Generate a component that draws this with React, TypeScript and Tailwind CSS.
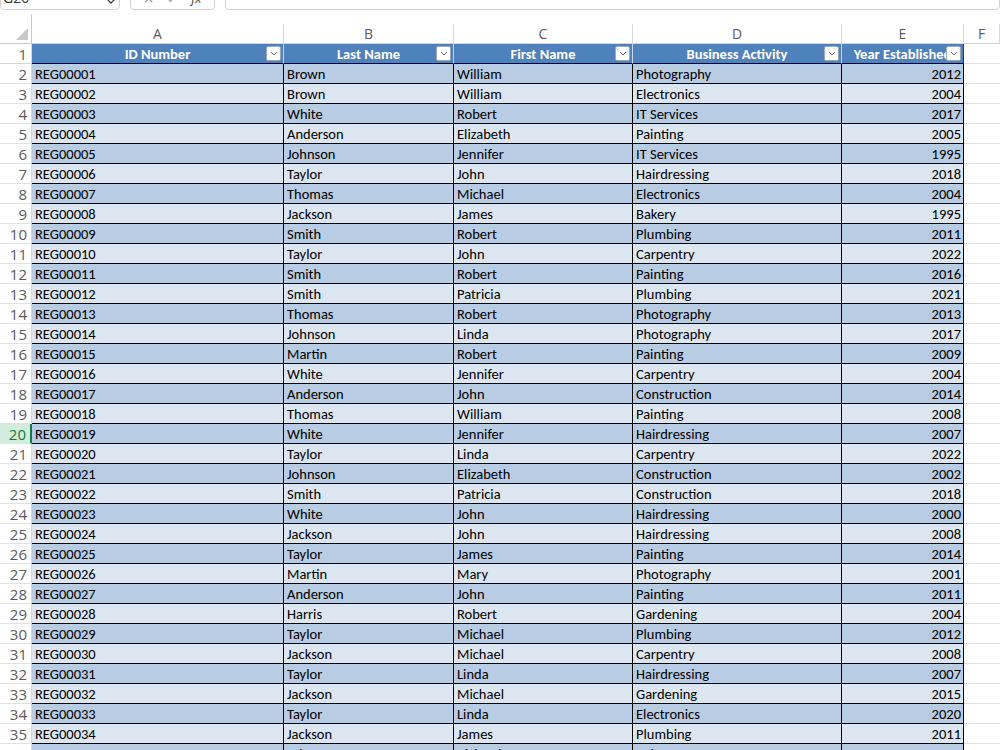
import React from "react";

type Row = [string, string, string, string, number];

const rows: Row[] = [
  ["REG00001", "Brown", "William", "Photography", 2012],
  ["REG00002", "Brown", "William", "Electronics", 2004],
  ["REG00003", "White", "Robert", "IT Services", 2017],
  ["REG00004", "Anderson", "Elizabeth", "Painting", 2005],
  ["REG00005", "Johnson", "Jennifer", "IT Services", 1995],
  ["REG00006", "Taylor", "John", "Hairdressing", 2018],
  ["REG00007", "Thomas", "Michael", "Electronics", 2004],
  ["REG00008", "Jackson", "James", "Bakery", 1995],
  ["REG00009", "Smith", "Robert", "Plumbing", 2011],
  ["REG00010", "Taylor", "John", "Carpentry", 2022],
  ["REG00011", "Smith", "Robert", "Painting", 2016],
  ["REG00012", "Smith", "Patricia", "Plumbing", 2021],
  ["REG00013", "Thomas", "Robert", "Photography", 2013],
  ["REG00014", "Johnson", "Linda", "Photography", 2017],
  ["REG00015", "Martin", "Robert", "Painting", 2009],
  ["REG00016", "White", "Jennifer", "Carpentry", 2004],
  ["REG00017", "Anderson", "John", "Construction", 2014],
  ["REG00018", "Thomas", "William", "Painting", 2008],
  ["REG00019", "White", "Jennifer", "Hairdressing", 2007],
  ["REG00020", "Taylor", "Linda", "Carpentry", 2022],
  ["REG00021", "Johnson", "Elizabeth", "Construction", 2002],
  ["REG00022", "Smith", "Patricia", "Construction", 2018],
  ["REG00023", "White", "John", "Hairdressing", 2000],
  ["REG00024", "Jackson", "John", "Hairdressing", 2008],
  ["REG00025", "Taylor", "James", "Painting", 2014],
  ["REG00026", "Martin", "Mary", "Photography", 2001],
  ["REG00027", "Anderson", "John", "Painting", 2011],
  ["REG00028", "Harris", "Robert", "Gardening", 2004],
  ["REG00029", "Taylor", "Michael", "Plumbing", 2012],
  ["REG00030", "Jackson", "Michael", "Carpentry", 2008],
  ["REG00031", "Taylor", "Linda", "Hairdressing", 2007],
  ["REG00032", "Jackson", "Michael", "Gardening", 2015],
  ["REG00033", "Taylor", "Linda", "Electronics", 2020],
  ["REG00034", "Jackson", "James", "Plumbing", 2011],
  ["REG00035", "Johnson", "Richard", "Bakery", 2019],
];

const headers = ["ID Number", "Last Name", "First Name", "Business Activity", "Year Established"];
const letters = ["A", "B", "C", "D", "E", "F"];

const gridCols = "grid grid-cols-[32px_252px_170px_179px_209px_122px_1fr] grid-rows-[20px] leading-none";
const cellFont = "font-['Carlito','Lato','Liberation_Sans',sans-serif]";
const uiFont = "font-['Segoe_UI','Open_Sans',sans-serif]";

function FilterButton() {
  return (
    <div className="absolute right-[2px] top-[2px] w-[15px] h-[15px] bg-white border border-[#9ea7b3] rounded-[2px] flex items-center justify-center">
      <svg width="8" height="5" viewBox="0 0 8 5" fill="none">
        <path d="M1 1 L4 4 L7 1" stroke="#6b6b6b" strokeWidth="1" />
      </svg>
    </div>
  );
}

export default function App() {
  const selectedRow = 20;
  return (
    <div className={`w-[1000px] h-[750px] overflow-hidden bg-white ${cellFont}`}>
      {/* formula bar, scrolled so only its lower edge shows */}
      <div className={`h-[10px] overflow-hidden flex items-end gap-[10px] ${uiFont} text-[14px] text-[#333]`}>
        <div className="w-[120px] h-[26px] shrink-0 border border-[#d1d1d1] rounded-[4px] bg-white flex items-center justify-between pl-[2px] pr-[3px]">
          <span className="leading-none mt-[2px]">G20</span>
          <svg width="10" height="6" viewBox="0 0 10 6" className="mt-[8px]">
            <path d="M1 1 L5 5 L9 1" stroke="#444" strokeWidth="1.3" fill="none" />
          </svg>
        </div>
        <div className="w-[85px] h-[26px] shrink-0 border border-[#d1d1d1] rounded-[4px] bg-white flex items-center justify-around px-[6px] text-[#999]">
          <span className="text-[18px] leading-none mt-[2px]">×</span>
          <svg width="12" height="10" viewBox="0 0 12 10" className="mt-[2px]">
            <path d="M1 5 L4.5 8.5 L11 1" stroke="#aaa" strokeWidth="1.2" fill="none" />
          </svg>
          <span className="italic text-[#444] text-[13px] leading-none mt-[3px]">fx</span>
        </div>
        <div className="flex-1 h-[26px] border border-[#d1d1d1] rounded-[4px] bg-white" />
      </div>

      <div className="h-[14px]" />

      {/* column letters */}
      <div className={`${gridCols} text-[14px] text-[#5a5a5a] ${uiFont}`}>
        <div className="relative border-r border-b border-[#c8c8c8] mt-[-10px] h-[30px]">
          <svg className="absolute right-[3px] bottom-[3px]" width="12" height="12" viewBox="0 0 12 12">
            <path d="M12 0 L12 12 L0 12 Z" fill="#c8c8c8" />
          </svg>
        </div>
        {letters.map((l) => (
          <div key={l} className="border-r border-b border-[#d6d6d6] flex items-center justify-center">
            {l}
          </div>
        ))}
      </div>

      {/* header row */}
      <div className={gridCols}>
        <div className={`border-r border-b border-[#d6d6d6] text-[#5a5a5a] text-[15px] flex items-center justify-end pr-[4px] pt-[1px] ${uiFont}`}>
          1
        </div>
        {headers.map((h, i) => (
          <div
            key={h}
            className={`relative bg-[#4f81bd] border-b border-black ${i < 4 ? "border-r border-r-[#c5d5ea]" : "border-r border-r-[#1f3f66]"} overflow-hidden`}
          >
            <div className="h-full flex items-center justify-center pt-[2px] text-white font-bold text-[14.5px] whitespace-nowrap">
              {h}
            </div>
            <FilterButton />
          </div>
        ))}
        <div className="border-b border-[#e1e1e1]" />
      </div>

      {/* data rows */}
      {rows.map((r, idx) => {
        const rowNo = idx + 2;
        const band = idx % 2 === 0 ? "bg-[#b8cce4]" : "bg-[#dce6f1]";
        const selected = rowNo === selectedRow;
        return (
          <div key={r[0]} className={`${gridCols} text-[14.5px] text-black`}>
            <div
              className={`border-b border-b-[#e1e1e1] flex items-center justify-end pr-[4px] pt-[1px] text-[15px] ${uiFont} ${
                selected
                  ? "bg-[#d2eddc] text-[#0e7a3c] border-r-2 border-r-[#107c41]"
                  : "text-[#5a5a5a] border-r border-r-[#d6d6d6]"
              }`}
            >
              {rowNo}
            </div>
            {[r[0], r[1], r[2], r[3]].map((v, ci) => (
              <div
                key={ci}
                className={`${band} border-r border-b border-black flex items-center pl-[3px] pt-[2px] whitespace-nowrap overflow-hidden`}
              >
                {v}
              </div>
            ))}
            <div className={`${band} border-r border-b border-black flex items-center justify-end pr-[2px] pt-[2px]`}>
              {r[4]}
            </div>
            <div className="border-b border-[#e1e1e1]" />
          </div>
        );
      })}
    </div>
  );
}
